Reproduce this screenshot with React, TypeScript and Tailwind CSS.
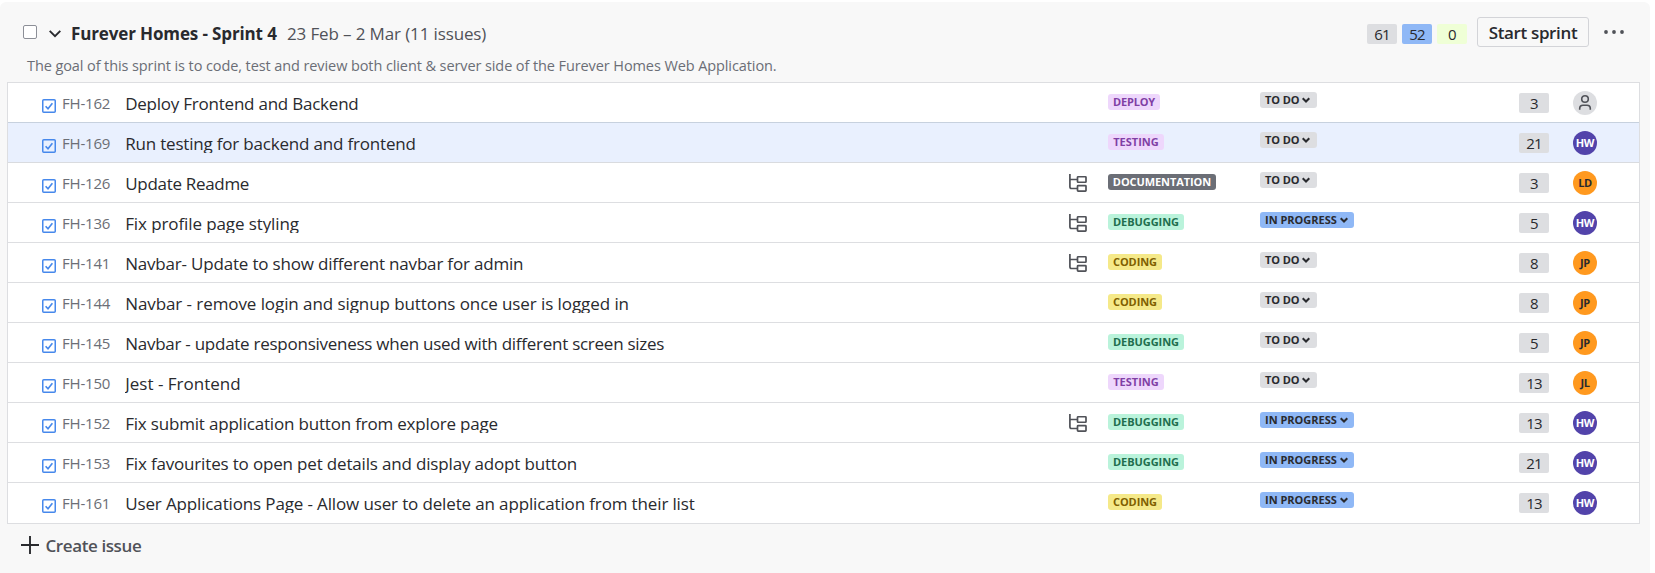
type Epic = "DEPLOY" | "TESTING" | "DOCUMENTATION" | "DEBUGGING" | "CODING";
type Status = "TO DO" | "IN PROGRESS";

interface Issue {
  id: string;
  summary: string;
  tracking: string;
  epic: Epic;
  status: Status;
  points: number;
  assignee?: string;
  subtasks?: boolean;
  selected?: boolean;
}

const ISSUES: Issue[] = [
  { id: "FH-162", summary: "Deploy Frontend and Backend", tracking: "tracking-[-0.23px]", epic: "DEPLOY", status: "TO DO", points: 3 },
  { id: "FH-169", summary: "Run testing for backend and frontend", tracking: "tracking-[-0.19px]", epic: "TESTING", status: "TO DO", points: 21, assignee: "HW", selected: true },
  { id: "FH-126", summary: "Update Readme", tracking: "tracking-[-0.3px]", epic: "DOCUMENTATION", status: "TO DO", points: 3, assignee: "LD", subtasks: true },
  { id: "FH-136", summary: "Fix profile page styling", tracking: "tracking-[-0.1px]", epic: "DEBUGGING", status: "IN PROGRESS", points: 5, assignee: "HW", subtasks: true },
  { id: "FH-141", summary: "Navbar- Update to show different navbar for admin", tracking: "tracking-[-0.19px]", epic: "CODING", status: "TO DO", points: 8, assignee: "JP", subtasks: true },
  { id: "FH-144", summary: "Navbar - remove login and signup buttons once user is logged in", tracking: "tracking-[-0.08px]", epic: "CODING", status: "TO DO", points: 8, assignee: "JP" },
  { id: "FH-145", summary: "Navbar - update responsiveness when used with different screen sizes", tracking: "tracking-[-0.26px]", epic: "DEBUGGING", status: "TO DO", points: 5, assignee: "JP" },
  { id: "FH-150", summary: "Jest - Frontend", tracking: "tracking-[0.01px]", epic: "TESTING", status: "TO DO", points: 13, assignee: "JL" },
  { id: "FH-152", summary: "Fix submit application button from explore page", tracking: "tracking-[-0.19px]", epic: "DEBUGGING", status: "IN PROGRESS", points: 13, assignee: "HW", subtasks: true },
  { id: "FH-153", summary: "Fix favourites to open pet details and display adopt button", tracking: "tracking-[-0.17px]", epic: "DEBUGGING", status: "IN PROGRESS", points: 21, assignee: "HW" },
  { id: "FH-161", summary: "User Applications Page - Allow user to delete an application from their list", tracking: "tracking-[-0.14px]", epic: "CODING", status: "IN PROGRESS", points: 13, assignee: "HW" },
];

const EPIC_STYLES: Record<Epic, string> = {
  DEPLOY: "w-[52px] bg-[#eed7fc] text-[#803fa5] tracking-[-0.15px]",
  TESTING: "w-[56px] bg-[#eed7fc] text-[#803fa5]",
  DOCUMENTATION: "w-[108px] bg-[#6b6e76] text-white tracking-[-0.08px]",
  DEBUGGING: "w-[76px] bg-[#baf3db] text-[#216e4e] tracking-[-0.05px]",
  CODING: "w-[54px] bg-[#f5e989] text-[#7f5f01] tracking-[-0.07px]",
};

const STATUS_STYLES: Record<Status, string> = {
  "TO DO": "w-[57px] bg-[#dddee1] tracking-[-0.1px]",
  "IN PROGRESS": "w-[94px] bg-[#8fb8f6]",
};

function TaskIcon() {
  return (
    <svg viewBox="0 0 14 14" className="mt-4 size-3.5 shrink-0" fill="none">
      <rect x="0.75" y="0.75" width="12.5" height="12.5" rx="1" stroke="#4688ec" strokeWidth="1.5" />
      <path d="M3.6 7.2 6 9.8 10.4 4.2" stroke="#4688ec" strokeWidth="1.6" />
    </svg>
  );
}

function SubtasksIcon() {
  return (
    <svg viewBox="0 0 18 18" className="size-[18px]" fill="none" stroke="#505258" strokeWidth="1.7">
      <path d="M0.9 0V12.8Q0.9 14.5 2.6 14.5H8.5M0.9 5.5H8.5" />
      <rect x="8.5" y="2.75" width="8.5" height="5.5" rx="0.6" />
      <rect x="8.5" y="11.6" width="8.5" height="5.5" rx="0.6" />
    </svg>
  );
}

function PersonIcon() {
  return (
    <svg viewBox="0 0 24 24" className="size-6" fill="none" stroke="#505258" strokeWidth="1.6">
      <circle cx="12" cy="8" r="3.3" />
      <path d="M6.7 18.7V17.6A3.3 3.3 0 0 1 10 14.3H14A3.3 3.3 0 0 1 17.3 17.6V18.7" />
    </svg>
  );
}

function Points({ value, color }: { value: number; color: string }) {
  return (
    <span className={`flex h-5 w-[30px] justify-center rounded-[2px] text-[15px] leading-[21px] tracking-[-0.8px] text-[#292a2e] ${color}`}>
      {value}
    </span>
  );
}

function Avatar({ initials }: { initials?: string }) {
  if (!initials) {
    return (
      <span className="size-6 rounded-full bg-[#dddee1]">
        <PersonIcon />
      </span>
    );
  }
  const color = initials === "HW" ? "bg-[#5243aa] text-white" : "bg-[#ff991f] text-[#292a2e]";
  return (
    <span className={`flex size-6 items-center justify-center rounded-full text-[11px] font-bold tracking-[-0.4px] ${color}`}>
      {initials}
    </span>
  );
}

function IssueRow({ issue }: { issue: Issue }) {
  return (
    <li
      className={`grid h-10 grid-cols-[34px_20px_63.2px_943.8px_39px_152px_259px_54px_24px] items-start border-b last:border-b-0 ${
        issue.selected ? "border-[#d9dbdf] bg-[#e9f0fe] shadow-[0_-1px_0_#c7d1de]" : "border-[#dddee1] bg-white"
      }`}
    >
      <span />
      <TaskIcon />
      <span className="mt-2.5 text-[15px] leading-5 tracking-[-0.2px] text-[#6b6e76]">{issue.id}</span>
      <span className={`mt-2.5 h-5 overflow-hidden whitespace-nowrap text-[17px] leading-[22px] text-[#292a2e] ${issue.tracking}`}>
        {issue.summary}
      </span>
      <span className="mt-[11px]">{issue.subtasks && <SubtasksIcon />}</span>
      <span className={`mt-[11px] flex h-4 items-center justify-center rounded-[3px] text-[11px] font-bold leading-4 ${EPIC_STYLES[issue.epic]}`}>
        {issue.epic}
      </span>
      <button
        type="button"
        className={`mt-[9px] flex h-4 items-center whitespace-nowrap rounded-[3px] pl-[5px] text-[11px] font-bold leading-4 text-[#292a2e] ${STATUS_STYLES[issue.status]}`}
      >
        {issue.status}
        <svg viewBox="0 0 8 6" className="ml-[3px] h-1.5 w-2 shrink-0" fill="none" stroke="#292a2e" strokeWidth="2">
          <path d="M0.7 1.2 4 4.5 7.3 1.2" />
        </svg>
      </button>
      <span className="mt-2.5">
        <Points value={issue.points} color="bg-[#dddee1]" />
      </span>
      <span className="mt-2 flex">
        <Avatar initials={issue.assignee} />
      </span>
    </li>
  );
}

function SprintHeader() {
  return (
    <header className="flex h-[52px] items-start">
      <span className="ml-[23px] mt-[23px] size-3.5 shrink-0 rounded-[2px] border border-[#8c8f97] bg-white" />
      <svg viewBox="0 0 12 8" className="ml-[11.5px] mt-7 h-2 w-3 shrink-0" fill="none" stroke="#292a2e" strokeWidth="1.9">
        <path d="M0.7 0.9 6 6.2 11.3 0.9" />
      </svg>
      <h2 className="ml-[10.5px] mt-[21px] w-[216px] whitespace-nowrap text-[17px] font-bold leading-[21px] tracking-[-0.13px] text-[#292a2e]">
        Furever Homes - Sprint 4
      </h2>
      <span className="mt-[21px] whitespace-nowrap text-[17px] leading-[21px] tracking-[-0.13px] text-[#505258]">
        23 Feb – 2 Mar (11 issues)
      </span>
      <div className="ml-auto mt-[22px] flex gap-[5px]">
        <Points value={61} color="bg-[#dddee1]" />
        <Points value={52} color="bg-[#8fb8f6]" />
        <Points value={0} color="bg-[#efffd6]" />
      </div>
      <button
        type="button"
        className="ml-2.5 mt-[15px] flex h-[30px] w-28 items-center justify-center whitespace-nowrap rounded-[3px] border border-[#d3d4d8] text-[17px] font-semibold leading-[21px] tracking-[-0.35px] text-[#292a2e]"
      >
        Start sprint
      </button>
      <svg viewBox="0 0 20 4" className="ml-[15px] mr-[26px] mt-7 h-1 w-5 shrink-0" fill="#505258">
        <circle cx="2" cy="2" r="1.9" />
        <circle cx="10" cy="2" r="1.9" />
        <circle cx="18" cy="2" r="1.9" />
      </svg>
    </header>
  );
}

export default function App() {
  return (
    <div className="h-[573px] w-[1655px] overflow-hidden bg-white pt-0.5 font-['Open_Sans','Noto_Sans',sans-serif]">
      <section className="h-[571px] w-[1650px] rounded-t-md bg-[#f8f8f8]">
        <SprintHeader />
        <p className="h-7 whitespace-nowrap pl-[27px] pt-px text-[14.5px] leading-[21px] tracking-[-0.095px] text-[#6b6e76]">
          The goal of this sprint is to code, test and review both client &amp; server side of the Furever Homes Web Application.
        </p>
        <ul className="ml-[7px] w-[1633px] border border-[#dddee1]">
          {ISSUES.map((issue) => (
            <IssueRow key={issue.id} issue={issue} />
          ))}
        </ul>
        <button type="button" className="ml-[21px] mt-3 flex items-start">
          <svg viewBox="0 0 18 18" className="size-[18px]" stroke="#292a2e" strokeWidth="1.9">
            <path d="M9 0V18M0 9H18" />
          </svg>
          <span className="-mt-px ml-[6.5px] whitespace-nowrap text-[17px] font-semibold leading-[21px] tracking-[-0.4px] text-[#505258]">
            Create issue
          </span>
        </button>
      </section>
    </div>
  );
}
